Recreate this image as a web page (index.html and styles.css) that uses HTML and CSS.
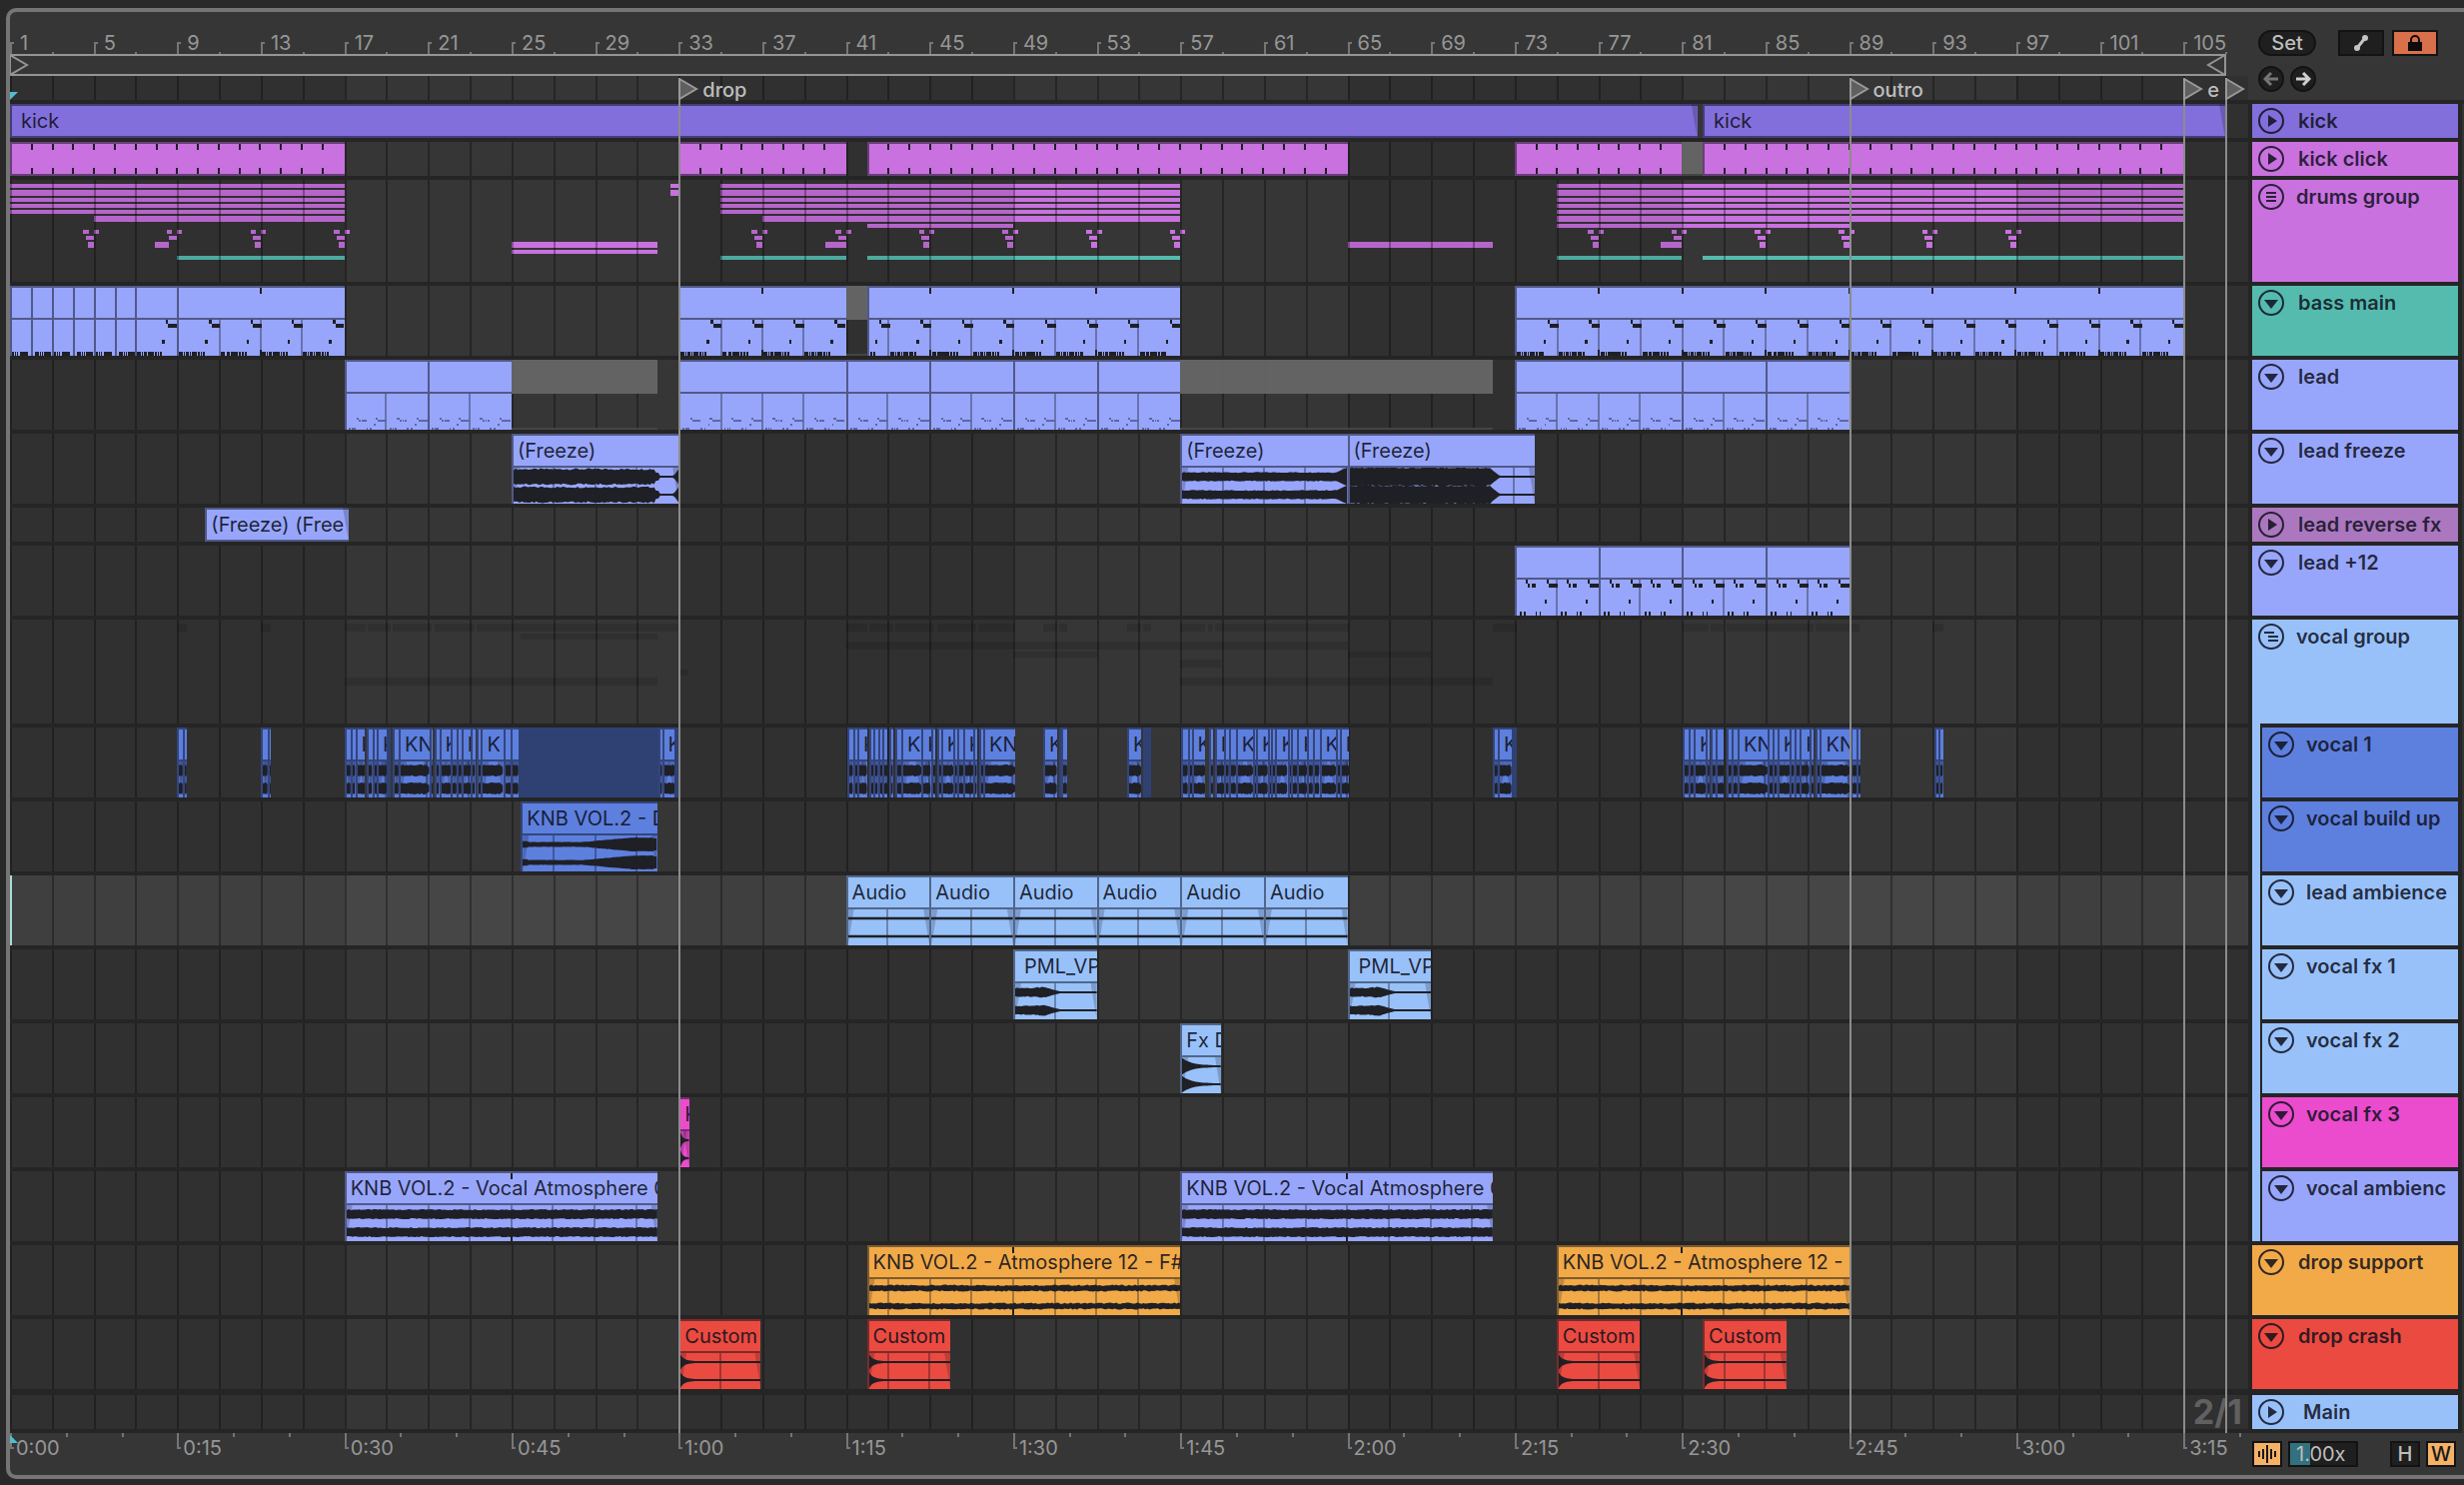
FILE: index.html
```html
<!DOCTYPE html>
<html lang="en">
<head>
    <meta charset="UTF-8">
    <meta name="viewport" content="width=device-width, initial-scale=1.0">
    <title>Arrangement</title>
    <link rel="stylesheet" href="styles.css">
</head>
<body>
    <!-- Shared icons -->
    <svg class="defs" aria-hidden="true">
        <symbol id="icon-folded" viewBox="0 0 26 26">
            <circle cx="13" cy="13" r="12" fill="none" stroke="currentColor" stroke-width="2"/>
            <path d="M10 7l9 6-9 6z" fill="currentColor"/>
        </symbol>
        <symbol id="icon-open" viewBox="0 0 26 26">
            <circle cx="13" cy="13" r="12" fill="none" stroke="currentColor" stroke-width="2"/>
            <path d="M6 10h14l-7 9z" fill="currentColor"/>
        </symbol>
        <symbol id="icon-group" viewBox="0 0 26 26">
            <circle cx="13" cy="13" r="12" fill="none" stroke="currentColor" stroke-width="2"/>
            <path d="M8 9h10M8 13h10M8 17h10" stroke="currentColor" stroke-width="2"/>
        </symbol>
        <symbol id="icon-group-open" viewBox="0 0 26 26">
            <circle cx="13" cy="13" r="12" fill="none" stroke="currentColor" stroke-width="2"/>
            <path d="M6 9h10M10 13h10M10 17h10" stroke="currentColor" stroke-width="2"/>
        </symbol>
    </svg>

    <main class="panel">
        <div class="top">
            <div class="top-left">
                <div class="ruler" id="barRuler"></div>
                <div class="loop">
                    <div class="loop-brace">
                        <svg width="20" height="22" viewBox="0 0 20 22"><path d="M1 1l17 10L1 21z"/></svg>
                        <svg width="20" height="22" viewBox="0 0 20 22"><path d="M19 1L2 11l17 10z"/></svg>
                    </div>
                </div>
                <div class="lane locator-lane"><span class="start-flag"></span></div>
            </div>
            <div class="toolbar">
                <div class="toolbar-row">
                    <button class="btn btn-set">Set</button>
                    <button class="btn btn-wide" aria-label="Automation">
                        <svg width="20" height="22" viewBox="0 0 20 22"><path d="M6 16L14 6" stroke="#c4c4c4" stroke-width="3"/><circle cx="6" cy="16" r="3" fill="#c4c4c4"/><circle cx="14" cy="6" r="3" fill="#c4c4c4"/></svg>
                    </button>
                    <button class="btn btn-wide btn-lock" aria-label="Lock envelopes">
                        <svg width="16" height="16" viewBox="0 0 16 16"><path d="M4 8V5a4 4 0 0 1 8 0v3" fill="none" stroke="#0c0c0c" stroke-width="2"/><path d="M1 7h14v9H1z" fill="#0c0c0c"/></svg>
                    </button>
                </div>
                <div class="toolbar-row">
                    <button class="btn btn-round" aria-label="Previous locator">
                        <svg width="16" height="14" viewBox="0 0 16 14"><path d="M15 7H2M8 1L2 7l6 6" fill="none" stroke="#757575" stroke-width="3"/></svg>
                    </button>
                    <button class="btn btn-round" aria-label="Next locator">
                        <svg width="16" height="14" viewBox="0 0 16 14"><path d="M1 7h13M8 1l6 6-6 6" fill="none" stroke="#d0d0d0" stroke-width="3"/></svg>
                    </button>
                </div>
            </div>
        </div>

        <div class="tracks">
            <div class="track small">
                <div class="lane" data-track="kick"></div>
                <div class="head-wrap"><div class="head violet"><svg><use href="#icon-folded"/></svg>kick</div></div>
            </div>
            <div class="track small">
                <div class="lane" data-track="kickClick"></div>
                <div class="head-wrap"><div class="head pink"><svg><use href="#icon-folded"/></svg>kick click</div></div>
            </div>
            <div class="track drums">
                <div class="lane group" data-track="drums"></div>
                <div class="head-wrap"><div class="head pink"><svg><use href="#icon-group"/></svg>drums group</div></div>
            </div>
            <div class="track">
                <div class="lane" data-track="bass"></div>
                <div class="head-wrap"><div class="head teal"><svg><use href="#icon-open"/></svg>bass main</div></div>
            </div>
            <div class="track">
                <div class="lane" data-track="lead"></div>
                <div class="head-wrap"><div class="head lilac"><svg><use href="#icon-open"/></svg>lead</div></div>
            </div>
            <div class="track">
                <div class="lane" data-track="leadFreeze"></div>
                <div class="head-wrap"><div class="head lilac"><svg><use href="#icon-open"/></svg>lead freeze</div></div>
            </div>
            <div class="track small">
                <div class="lane" data-track="leadReverse"></div>
                <div class="head-wrap"><div class="head purple"><svg><use href="#icon-folded"/></svg>lead reverse fx</div></div>
            </div>
            <div class="track">
                <div class="lane" data-track="lead12"></div>
                <div class="head-wrap"><div class="head lilac"><svg><use href="#icon-open"/></svg>lead +12</div></div>
            </div>
            <div class="track vocals">
                <div class="lane group" data-track="vocalGroup"></div>
                <div class="head-wrap nest"><div class="head sky"><svg><use href="#icon-group-open"/></svg>vocal group</div></div>
            </div>
            <div class="track">
                <div class="lane" data-track="vocal1"></div>
                <div class="head-wrap nest child"><div class="head blue"><svg><use href="#icon-open"/></svg>vocal 1</div></div>
            </div>
            <div class="track">
                <div class="lane" data-track="vocalBuild"></div>
                <div class="head-wrap nest child"><div class="head blue"><svg><use href="#icon-open"/></svg>vocal build up</div></div>
            </div>
            <div class="track">
                <div class="lane selected" data-track="leadAmbience"></div>
                <div class="head-wrap nest child"><div class="head sky"><svg><use href="#icon-open"/></svg>lead ambience</div></div>
            </div>
            <div class="track">
                <div class="lane" data-track="fx1"></div>
                <div class="head-wrap nest child"><div class="head sky"><svg><use href="#icon-open"/></svg>vocal fx 1</div></div>
            </div>
            <div class="track">
                <div class="lane" data-track="fx2"></div>
                <div class="head-wrap nest child"><div class="head sky"><svg><use href="#icon-open"/></svg>vocal fx 2</div></div>
            </div>
            <div class="track">
                <div class="lane" data-track="fx3"></div>
                <div class="head-wrap nest child"><div class="head magenta"><svg><use href="#icon-open"/></svg>vocal fx 3</div></div>
            </div>
            <div class="track">
                <div class="lane" data-track="vocalAmbience"></div>
                <div class="head-wrap nest child last"><div class="head lilac"><svg><use href="#icon-open"/></svg>vocal ambienc</div></div>
            </div>
            <div class="track">
                <div class="lane" data-track="dropSupport"></div>
                <div class="head-wrap"><div class="head orange"><svg><use href="#icon-open"/></svg>drop support</div></div>
            </div>
            <div class="track crash">
                <div class="lane" data-track="dropCrash"></div>
                <div class="head-wrap"><div class="head red"><svg><use href="#icon-open"/></svg>drop crash</div></div>
            </div>
            <div class="track small main-track">
                <div class="lane"><span class="grid-size">2/1</span></div>
                <div class="head-wrap"><div class="head sky"><svg><use href="#icon-folded"/></svg>Main</div></div>
            </div>
        </div>

        <div class="bottom">
            <div class="ruler time-ruler" id="timeRuler"><span class="end-flag"></span></div>
            <div class="status">
                <button class="btn btn-small btn-amber" aria-label="Waveforms">
                    <svg width="24" height="20" viewBox="0 0 24 20"><path d="M4 7v6M8 5v10M12 1v18M16 5v10M20 7v6" stroke="#1a1a1a" stroke-width="2"/></svg>
                </button>
                <input class="zoom" type="text" value="1.00x" aria-label="Track zoom">
                <button class="btn btn-small btn-h">H</button>
                <button class="btn btn-small btn-amber">W</button>
            </div>
        </div>

        <div class="markers" id="markers"></div>
    </main>

    <script src="script.js"></script>
</body>
</html>
```
FILE: styles.css
```css
:root {
    --panel: #363636;
    --line: #252525;
    --head-width: 216px;
}

* {
    box-sizing: border-box;
}

body {
    margin: 0;
    background-color: #292929;
    font-family: Inter, "Liberation Sans", sans-serif;
    font-size: 20px;
    line-height: 26px;
    overflow-x: hidden;
}

.defs {
    position: absolute;
    width: 0;
    height: 0;
}

.panel {
    position: relative;
    margin: 8px 0 6px 6px;
    border: 4px solid #757575;
    border-right: none;
    border-radius: 10px 0 0 10px;
    background-color: var(--panel);
    overflow: hidden;
}

.top,
.track,
.bottom {
    display: grid;
    grid-template-columns: minmax(0, 1fr) var(--head-width);
}

.top {
    border-bottom: 4px solid var(--line);
}

/* Rulers */
.ruler {
    position: relative;
    height: 42px;
    color: #969696;
    overflow: hidden;
}

.tick {
    position: absolute;
    bottom: 0;
    width: 4px;
    height: 12px;
    border-left: 2px solid #757575;
    border-top: 2px solid #757575;
}

.tick.minor {
    width: 2px;
    height: 2px;
    border-top: none;
}

.tick span {
    position: absolute;
    left: 8px;
    bottom: -2px;
}

.time-ruler .tick {
    top: 0;
    bottom: auto;
    height: 16px;
    border-top: none;
    border-bottom: 2px solid #757575;
}

.time-ruler .tick.minor {
    height: 4px;
    border-bottom: none;
}

.time-ruler .tick span {
    left: 4px;
    top: 2px;
    bottom: auto;
}

.loop {
    height: 22px;
}

.loop-brace {
    display: flex;
    justify-content: space-between;
    height: 22px;
    margin-right: 22px;
    border: 2px solid #949494;
    border-left-width: 1px;
}

.loop-brace svg {
    margin: -2px;
    fill: none;
    stroke: #949494;
    stroke-width: 2;
}

/* Lanes */
.lane {
    position: relative;
    background-color: var(--panel);
    overflow: hidden;
    isolation: isolate;
}

.locator-lane {
    height: 24px;
}

.lane.selected {
    background-color: #464646;
}

.lane.selected::after {
    content: "";
    position: absolute;
    top: 0;
    bottom: 0;
    left: 0;
    width: 2px;
    background-color: #a9dcd8;
}

.shade,
.grid-line {
    position: absolute;
    top: 0;
    bottom: 0;
}

.shade {
    background-color: rgba(0, 0, 0, 0.095);
}

.grid-line {
    width: 2px;
    background-color: rgba(0, 0, 0, 0.31);
}

.group .shade,
.group .grid-line {
    z-index: 1;
}

.track {
    height: 74px;
    background-color: var(--line);
}

.track .lane {
    margin-bottom: 4px;
}

.track.small {
    height: 38px;
}

.track.drums {
    height: 106px;
}

.track.vocals {
    height: 108px;
}

.track.crash {
    height: 76px;
}

.track.crash .lane,
.track.crash .head {
    margin-bottom: 6px;
}

.grid-size {
    position: absolute;
    right: 6px;
    top: 0;
    font-size: 34px;
    font-weight: 700;
    line-height: 34px;
    color: #6b6b6b;
}

/* Track headers */
.head-wrap {
    display: grid;
    padding: 0 4px;
    border-right: 2px solid #333;
}

.head {
    display: flex;
    align-items: flex-start;
    gap: 14px;
    margin-bottom: 4px;
    padding: 4px 0 0 6px;
    font-weight: 600;
    color: rgba(16, 18, 30, 0.86);
    white-space: nowrap;
    overflow: hidden;
}

.head svg {
    flex: none;
    width: 26px;
    height: 26px;
}

.group + .head-wrap .head {
    gap: 12px;
}

.main-track .head {
    gap: 19px;
}

.nest {
    background: linear-gradient(to right, var(--line) 4px, #98c1fa 4px, #98c1fa 12px, var(--line) 12px);
}

.nest.child {
    padding-left: 14px;
}

.nest.last {
    background-size: 100% 70px;
    background-repeat: no-repeat;
}

.nest.child .head {
    gap: 12px;
}

/* Colours */
.violet { background-color: #826fdb; }
.pink { background-color: #c971df; }
.teal { background-color: #55bbaf; }
.lilac { background-color: #97a6fa; }
.purple { background-color: #ab77be; }
.sky { background-color: #98c1fa; }
.blue { background-color: #5d7fde; }
.magenta { background-color: #eb4bcd; }
.orange { background-color: #f2aa48; }
.red { background-color: #ea4a40; }
.navy { background-color: #2f4073; }
.faint { background-color: rgba(0, 0, 0, 0.12); }

/* Clips */
.clip {
    position: absolute;
    top: 0;
    bottom: 0;
    overflow: hidden;
    border-left: 2px solid rgba(10, 12, 22, 0.5);
}

.clip-title {
    height: 34px;
    padding-left: 4px;
    border: solid rgba(10, 12, 22, 0.5);
    border-width: 2px 0;
    line-height: 30px;
    white-space: nowrap;
    overflow: hidden;
    color: rgba(16, 18, 30, 0.9);
}

.clip-title.inset {
    padding-left: 9px;
}

.clip-body {
    position: relative;
    height: 36px;
}

.clip-body svg {
    position: absolute;
    left: 0;
    top: 0;
    width: 100%;
    height: 100%;
}

.body-line,
.loop-mark,
.fade {
    position: absolute;
    top: 0;
    bottom: 0;
    width: 2px;
    margin-left: -2px;
}

.body-line {
    background-color: rgba(10, 12, 22, 0.33);
}

.loop-mark {
    top: 2px;
    bottom: auto;
    height: 6px;
    background-color: #1f2026;
}

.loop-mark.low {
    top: auto;
    bottom: 0;
}

.small .loop-mark.low {
    bottom: 2px;
}

.fade {
    width: 6px;
    margin: 0;
    background-color: rgba(10, 12, 22, 0.2);
}

.fade.in {
    left: 0;
    clip-path: polygon(0 0, 100% 0, 0 100%);
}

.fade.out {
    right: 0;
    clip-path: polygon(0 0, 100% 0, 100% 100%);
}

.dark-block {
    position: absolute;
    top: 0;
    bottom: 0;
}

.muted {
    position: absolute;
    top: 0;
    height: 34px;
    background-color: rgba(101, 101, 101, 0.96);
}

.muted-notes {
    position: absolute;
    bottom: 0;
    height: 2px;
    background-color: #454545;
}

.mini {
    position: absolute;
}

/* Locators */
.markers {
    position: absolute;
    top: 66px;
    bottom: 42px;
    left: 0;
    right: var(--head-width);
    pointer-events: none;
}

.marker {
    position: absolute;
    top: 0;
    bottom: 0;
    display: flex;
    gap: 4px;
    border-left: 2px solid #8c8c8c;
    line-height: 24px;
    font-weight: 500;
    color: #bdbdbd;
}

.marker svg {
    margin-left: -2px;
    fill: #5f5f5f;
    stroke: #999;
    stroke-width: 2;
}

.start-flag,
.end-flag {
    position: absolute;
    left: 0;
    width: 8px;
    height: 8px;
    background-color: #50bdd0;
    z-index: 1;
}

.start-flag {
    bottom: 0;
    clip-path: polygon(0 0, 100% 0, 0 100%);
}

.end-flag {
    top: 2px;
    clip-path: polygon(0 0, 100% 100%, 0 100%);
}

/* Controls */
.toolbar {
    display: flex;
    flex-direction: column;
    gap: 10px;
    padding: 18px 0 0 10px;
}

.toolbar-row {
    display: flex;
    gap: 6px;
}

.btn {
    display: flex;
    align-items: center;
    justify-content: center;
    height: 26px;
    padding: 0;
    border: 2px solid #131313;
    background-color: #1f1f1f;
    font: 500 20px/22px Inter, "Liberation Sans", sans-serif;
    color: #bdbdbd;
}

.btn-set {
    width: 58px;
    margin-right: 16px;
    border-radius: 13px;
}

.btn-wide {
    width: 46px;
    margin-right: 2px;
}

.btn-lock {
    background-color: #d8704b;
}

.btn-round {
    width: 26px;
    border-radius: 13px;
}

.status {
    display: flex;
    gap: 6px;
    padding: 8px 8px 0 4px;
}

.btn-small {
    width: 30px;
}

.btn-amber {
    background-color: #f5b266;
    color: #1a1a1a;
}

.btn-h {
    margin-left: auto;
}

.zoom {
    width: 70px;
    height: 26px;
    padding: 0 0 0 6px;
    border: 2px solid #131313;
    background: linear-gradient(to right, #33717f 20px, #1f1f1f 20px);
    font: 20px/22px Inter, "Liberation Sans", sans-serif;
    color: #bdbdbd;
}
```
FILE: script.js
```js
// Number of bars that fit in the visible part of the timeline
const VISIBLE_BARS = 107.1;
const SECONDS_PER_BAR = 1.875;

const pct = bars => (bars / VISIBLE_BARS * 100) + '%';

function add(parent, className, from, to) {
    const el = document.createElement('div');
    el.className = className;
    if (from !== undefined) {
        el.style.left = pct(from - 1);
    }
    if (to !== undefined) {
        el.style.width = pct(to - from);
    }
    parent.appendChild(el);
    return el;
}

/* ---- waveforms ---- */

function noise(i) {
    const v = Math.sin(i * 12.9898) * 43758.5453;
    return v - Math.floor(v);
}

// Each shape gives the half height of one channel, 0 to 9, at t = 0..1
const shapes = {
    freezeA: (t, n) => t > 0.97 ? 1 + (t - 0.97) * 230 : t > 0.88 ? 1 : t > 0.86 ? 4 : 6.6 + n * 1.8,
    freezeB: (t, n) => t > 0.93 ? 4 + (t - 0.93) * 75 : 3.8 + n,
    freezeC: (t, n) => t > 0.8 ? 1 : t > 0.76 ? 8 - (t - 0.76) * 150 : 8.3 + n * 1.2,
    vocal: (t, n) => t > 0.88 ? 5.5 - (t - 0.88) * 18 : 4.8 + n * 1.3,
    build: (t, n) => t < 0.04 ? 3.2 : t > 0.97 ? 6 : t < 0.45 ? 2.2 + n * 0.4 : Math.min(6.6, 2.2 + (t - 0.45) * 12) + n * 0.4,
    thin: () => 1.2,
    pml: (t, n) => t < 0.4 ? 3.8 + n + (t > 0.25 && t < 0.38 ? 0.6 : 0) : Math.max(1, 4.2 - (t - 0.4) * 22),
    decay: t => 0.8 + 7.5 * Math.exp(-t * 4),
    crash: t => 0.9 + 6.5 * Math.exp(-t * 20),
    pad: (t, n) => 4 + n * 1.1,
    support: (t, n) => 2.2 + n * 1.3
};

function waveform(shape, bars) {
    const steps = Math.max(12, Math.round(bars * 10));
    let d = '';
    [9, 27].forEach((mid, channel) => {
        const top = [];
        const low = [];
        for (let i = 0; i <= steps; i++) {
            const t = i / steps;
            top.push(i + ' ' + (mid - shapes[shape](t, noise(i + channel * 31))).toFixed(1));
            low.unshift(i + ' ' + (mid + shapes[shape](t, noise(i + 400 + channel * 31))).toFixed(1));
        }
        d += 'M' + top.concat(low).join('L') + 'z';
    });
    return '<svg viewBox="0 0 ' + steps + ' 36" preserveAspectRatio="none"><path fill="#1f2026" d="' + d + '"/></svg>';
}

/* ---- midi notes: x, y, width, height inside a 94 x 36 two bar cell ---- */

const patterns = {
    bass: [[1, 32, 9, 4], [12, 32, 2, 4], [16, 32, 7, 4], [25, 32, 3, 4], [29, 32, 12, 4], [43, 32, 4, 4], [49, 32, 4, 4],
        [55, 32, 5, 4], [60, 20, 5, 4], [69, 0, 5, 4], [74, 4, 20, 4]],
    roll: [[1, 32, 3, 4], [7, 32, 2, 4], [12, 32, 3, 4], [19, 32, 22, 4], [46, 32, 2, 4], [52, 32, 10, 4], [65, 32, 2, 4],
        [69, 32, 2, 4], [75, 32, 17, 4]],
    lead: [[22, 24, 5, 2], [27, 26, 6, 2], [34, 26, 4, 2], [39, 26, 6, 2], [67, 24, 5, 2], [72, 26, 20, 2], [63, 30, 4, 2],
        [5, 34, 4, 2], [12, 34, 3, 2], [17, 34, 3, 2], [45, 34, 4, 2], [54, 34, 3, 2]],
    lead12: [[20, 0, 5, 4], [25, 4, 5, 4], [34, 4, 9, 4], [69, 0, 5, 4], [74, 4, 20, 4], [65, 20, 5, 4],
        [8, 32, 4, 4], [16, 32, 4, 4], [43, 32, 4, 4], [52, 32, 4, 4]]
};

function notes(name, from, to) {
    let rects = '';
    for (let bar = from - (from + 1) % 2; bar < to; bar += 2) {
        patterns[name].forEach(([x, y, w, h]) => {
            rects += '<rect x="' + ((bar - from) * 47 + x) + '" y="' + y + '" width="' + w + '" height="' + h + '"/>';
        });
    }
    return '<svg viewBox="0 0 ' + (to - from) * 47 + ' 36" preserveAspectRatio="none" shape-rendering="crispEdges" fill="' +
        (name === 'lead' ? '#5c68a3' : '#1f2026') + '">' + rects + '</svg>';
}

/* ---- clips ---- */

function addClip(lane, color, clip) {
    const [from, to] = clip.at;
    const el = add(lane, 'clip ' + color, from, to);
    const inside = bar => ((bar - from) / (to - from) * 100) + '%';

    const title = add(el, 'clip-title' + (clip.inset ? ' inset' : ''));
    title.textContent = clip.name || '';

    if (clip.notes || clip.wave) {
        const body = add(el, 'clip-body');
        for (let bar = Math.floor(from / 2) * 2 + 1; bar < to; bar += 2) {
            if (bar > from) {
                add(body, 'body-line').style.left = inside(bar);
            }
        }
        if (clip.wave) {
            add(body, 'fade in');
            add(body, 'fade out');
        }
        body.insertAdjacentHTML('beforeend', clip.notes ? notes(clip.notes, from, to) : waveform(clip.wave, to - from));
    } else if (clip.fadeOut) {
        add(el, 'fade out');
    }

    (clip.marks || []).forEach(bar => {
        add(el, 'loop-mark').style.left = inside(bar);
        add(el, 'loop-mark low').style.left = inside(bar);
    });
}

function every(step, from, to) {
    const list = [];
    for (let bar = from + step; bar < to; bar += step) {
        list.push(bar);
    }
    return list;
}

function split(edges, props) {
    return edges.slice(1).map((edge, i) => Object.assign({ at: [edges[i], edge] }, props));
}

// Very short chops have no room for a name
function chop(edges) {
    return split(edges, { wave: 'vocal' }).map(clip => {
        const bars = clip.at[1] - clip.at[0];
        clip.name = bars > 1.2 ? 'KNB' : bars > 0.43 ? 'K' : '';
        return clip;
    });
}

const vocalRuns = [
    [9, 9.28, 9.46],
    [13.02, 13.34, 13.48],
    [17.04, 17.32, 17.52, 17.98],
    [18.09, 18.34, 18.55, 19.04],
    [19.32, 19.6, 21.06, 21.23],
    [21.34, 21.54, 22.09, 22.37, 22.6, 23.06, 23.26],
    [23.34, 23.54, 24.6, 24.97, 25.34],
    [32.04, 32.2, 32.8],
    [41.07, 41.33, 41.54, 42],
    [42.12, 42.32, 42.53, 42.75, 43],
    [43.09, 43.25],
    [43.34, 43.65, 44.62, 45.06, 45.27],
    [45.36, 45.55, 46.13, 46.31, 46.6, 47.1, 47.26],
    [47.38, 47.57, 49.1],
    [50.44, 51.09],
    [51.3, 51.58],
    [54.45, 55.12],
    [57.03, 57.35, 57.54, 58.18],
    [58.37, 58.56],
    [58.65, 59.1, 59.32, 59.65, 60.46, 60.62, 61.18, 61.36, 61.55, 62.13, 62.31, 62.6, 63.08, 63.36, 63.66, 64.43, 64.63, 65.07],
    [71.96, 72.19, 72.84],
    [81.05, 81.33, 81.56, 82.14, 82.32],
    [82.37, 82.6, 83],
    [83.16, 83.39, 83.67, 85.1, 85.36, 85.57, 86.17, 86.38, 86.64, 87.1, 87.29],
    [87.38, 87.61, 89.07, 89.37, 89.56],
    [93.1, 93.3, 93.5]
];

const tracks = {
    kick: {
        color: 'violet',
        clips: [
            { at: [1, 81.74], name: 'kick', inset: true, fadeOut: true },
            { at: [82, 107], name: 'kick', inset: true, fadeOut: true }
        ]
    },
    kickClick: {
        color: 'pink',
        muted: [[81, 82]],
        clips: [[1, 17], [33, 41], [42, 65], [73, 81], [82, 105]].map(at => ({ at: at, marks: every(1, at[0], at[1]) }))
    },
    bass: {
        color: 'lilac',
        muted: [[41, 42]],
        clips: [
            ...split([1, 2, 3, 4, 5, 6, 7], { notes: 'roll' }),
            { at: [7, 9], notes: 'bass' },
            { at: [9, 17], notes: 'bass', marks: [13] },
            { at: [33, 41], notes: 'bass', marks: [37] },
            { at: [42, 57], notes: 'bass', marks: [45, 49, 53] },
            { at: [73, 105], notes: 'bass', marks: every(4, 73, 105) }
        ]
    },
    lead: {
        color: 'lilac',
        muted: [[25, 31.96], [57, 71.96]],
        clips: [
            ...split([17, 21, 25], { notes: 'lead' }),
            ...split([33, 41, 45, 49, 53, 57], { notes: 'lead' }),
            ...split([73, 81, 85, 89], { notes: 'lead' })
        ]
    },
    leadFreeze: {
        color: 'lilac',
        clips: [
            { at: [25, 33], name: '(Freeze)', wave: 'freezeA' },
            { at: [57, 65], name: '(Freeze)', wave: 'freezeB' },
            { at: [65, 73.96], name: '(Freeze)', wave: 'freezeC' }
        ]
    },
    leadReverse: {
        color: 'lilac',
        clips: [{ at: [10.34, 17.21], name: '(Freeze) (Free', fadeOut: true }]
    },
    lead12: {
        color: 'lilac',
        clips: split([73, 77, 81, 85, 89], { notes: 'lead12' })
    },
    vocal1: {
        color: 'blue',
        blocks: [[19.04, 19.23], [25.34, 32.04], [32.8, 33], [51.2, 51.3], [55.22, 55.59], [72.84, 73.12]],
        clips: vocalRuns.flatMap(chop)
    },
    vocalBuild: {
        color: 'blue',
        clips: [{ at: [25.45, 31.96], name: 'KNB VOL.2 - D', wave: 'build' }]
    },
    leadAmbience: {
        color: 'sky',
        clips: split([41, 45, 49, 53, 57, 61, 65], { name: 'Audio', wave: 'thin' })
    },
    fx1: {
        color: 'sky',
        clips: [[49, 53], [65, 69]].map(at => ({ at: at, name: 'PML_VP', inset: true, wave: 'pml' }))
    },
    fx2: {
        color: 'sky',
        clips: [{ at: [57, 58.95], name: 'Fx D', wave: 'decay' }]
    },
    fx3: {
        color: 'magenta',
        clips: [{ at: [33, 33.5], name: 'K', wave: 'decay' }]
    },
    vocalAmbience: {
        color: 'lilac',
        clips: [
            { at: [17, 31.96], name: 'KNB VOL.2 - Vocal Atmosphere 0', wave: 'pad', marks: [25] },
            { at: [57, 71.96], name: 'KNB VOL.2 - Vocal Atmosphere 0', wave: 'pad', marks: [65] }
        ]
    },
    dropSupport: {
        color: 'orange',
        clips: [
            { at: [42, 57], name: 'KNB VOL.2 - Atmosphere 12 - F#', wave: 'support', marks: [49] },
            { at: [75, 89], name: 'KNB VOL.2 - Atmosphere 12 - F', wave: 'support', marks: [81] }
        ]
    },
    dropCrash: {
        color: 'red',
        clips: [[33, 36.93], [42, 46], [75, 79], [82, 86]].map(at => ({ at: at, name: 'Custom', wave: 'crash' }))
    }
};

/* ---- group overviews: top, height, list of [from, to] ---- */

const drumRows = [
    [4, 4, [[1, 17], [32.62, 33], [35, 57], [75, 105]]],
    [10, 6, [[1, 17], [32.62, 33], [35, 57], [75, 105]]],
    [18, 4, [[1, 17], [35, 57], [75, 105]]],
    [24, 4, [[1, 17], [35, 57], [75, 105]]],
    [30, 4, [[1, 17], [35, 57], [75, 105]]],
    [36, 6, [[5, 17], [37, 57], [75, 105]]],
    [44, 4, [[42, 49], [75, 89]]],
    [62, 6, [[7.94, 8.6], [25, 31.96], [40, 41], [65, 71.96], [80, 81]]],
    [70, 4, [[25, 31.96]]]
];

[5, 9, 13, 17, 37, 41, 45, 49, 53, 57, 77, 81, 85, 89, 93, 97].forEach(bar => {
    drumRows.push([50, 4, [[bar - 0.5, bar - 0.24], [bar, bar + 0.24]]]);
    drumRows.push([56, 4, [[bar - 0.38, bar]]]);
    if (![9, 41, 81].includes(bar)) {
        drumRows.push([62, 6, [[bar - 0.28, bar]]]);
    }
});

const vocalRows = [
    [4, 8, [[9, 9.46], [13, 13.48], [17, 18], [18.1, 19.2], [19.3, 21.2], [21.3, 23.25], [23.35, 33], [41, 42], [42.1, 43.25],
        [43.35, 45.25], [45.35, 47.25], [47.35, 49.1], [50.44, 51.1], [51.2, 51.58], [54.45, 55.1], [55.2, 55.6],
        [57, 58.2], [58.35, 58.55], [58.65, 65.07], [71.96, 73.1], [81, 82.3], [82.4, 83], [83.15, 87.3], [87.4, 89.5], [93, 93.5]]],
    [14, 6, [[25.45, 31.96]]],
    [22, 8, [[41, 65]]],
    [32, 6, [[49, 53], [65, 69]]],
    [40, 8, [[57, 58.95]]],
    [50, 6, [[33, 33.46]]],
    [58, 8, [[17, 31.96], [57, 71.96]]]
];

const tealRow = [76, 4, [[9, 17], [35, 41], [42, 57], [75, 81], [82, 105]]];

function addRows(lane, color, rows) {
    rows.forEach(([top, height, spans]) => {
        spans.forEach(([from, to]) => {
            const el = add(lane, 'mini ' + color, from, to);
            el.style.top = top + 'px';
            el.style.height = height + 'px';
        });
    });
}

/* ---- build the page ---- */

document.querySelectorAll('.lane').forEach(lane => {
    for (let bar = 1; bar < VISIBLE_BARS; bar += 32) {
        add(lane, 'shade', bar, bar + 16);
    }
    for (let bar = 1; bar < VISIBLE_BARS + 1; bar += 2) {
        add(lane, 'grid-line', bar);
    }

    const name = lane.dataset.track;
    if (name === 'drums') {
        addRows(lane, 'pink', drumRows);
        addRows(lane, 'teal', [tealRow]);
    }
    if (name === 'vocalGroup') {
        addRows(lane, 'faint', vocalRows);
    }

    const track = tracks[name];
    if (!track) {
        return;
    }
    (track.blocks || []).forEach(([from, to]) => add(lane, 'dark-block navy', from, to));
    (track.muted || []).forEach(([from, to]) => {
        add(lane, 'muted', from, to);
        add(lane, 'muted-notes', from, to);
    });
    track.clips.forEach(clip => addClip(lane, track.color, clip));
});

const barRuler = document.getElementById('barRuler');
for (let bar = 1; bar <= 107; bar += 2) {
    const major = bar % 4 === 1;
    const tick = add(barRuler, major ? 'tick' : 'tick minor', bar);
    if (major) {
        tick.innerHTML = '<span>' + bar + '</span>';
    }
}

const timeRuler = document.getElementById('timeRuler');
for (let sec = 0; sec <= 200; sec += 5) {
    const major = sec % 15 === 0;
    const tick = add(timeRuler, major ? 'tick' : 'tick minor', 1 + sec / SECONDS_PER_BAR);
    if (major) {
        tick.innerHTML = '<span>' + Math.floor(sec / 60) + ':' + String(sec % 60).padStart(2, '0') + '</span>';
    }
}

const markers = document.getElementById('markers');
[[33, 'drop'], [89, 'outro'], [105, 'e'], [107, '']].forEach(([bar, label]) => {
    const marker = add(markers, 'marker', bar);
    marker.innerHTML = '<svg width="20" height="22" viewBox="0 0 20 22"><path d="M1 1l17 10L1 21z"/></svg><span>' + label + '</span>';
});
```
